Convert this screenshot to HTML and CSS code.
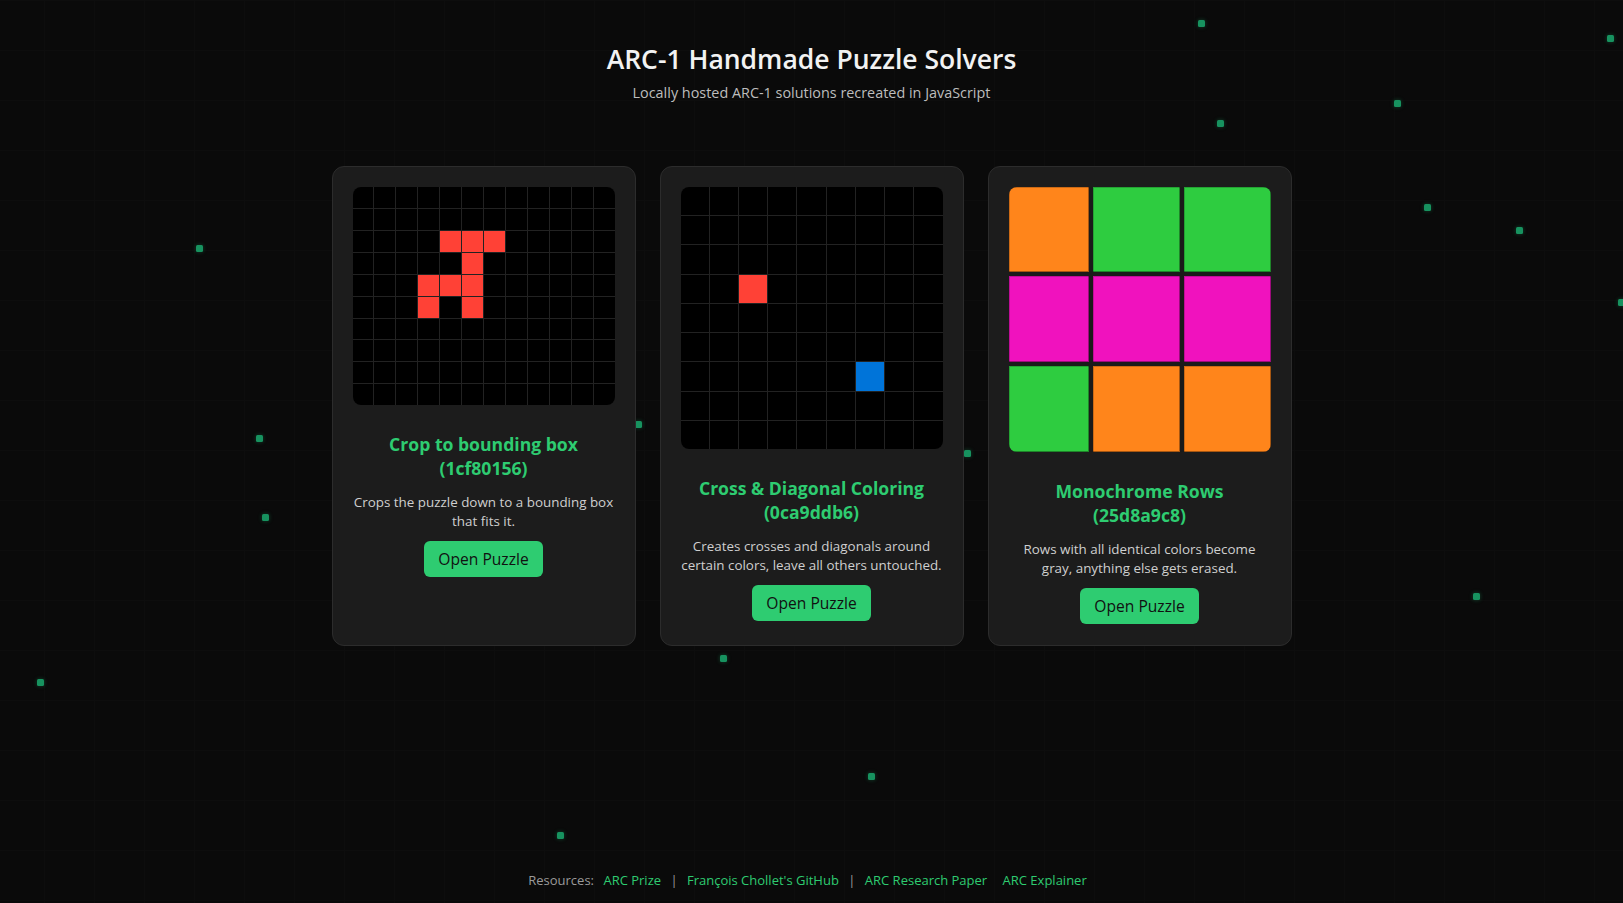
FILE: index.html
```html
<!DOCTYPE html>
<html lang="en">
<head>
<meta charset="utf-8">
<title>ARC-1 Handmade Puzzle Solvers</title>
<link rel="stylesheet" href="styles.css">
</head>
<body>
<div class="particles">
  <span class="dot" style="left:1198px;top:20px"></span>
  <span class="dot" style="left:1607px;top:35px"></span>
  <span class="dot" style="left:1394px;top:100px"></span>
  <span class="dot" style="left:1217px;top:120px"></span>
  <span class="dot" style="left:1424px;top:204px"></span>
  <span class="dot" style="left:1516px;top:227px"></span>
  <span class="dot" style="left:196px;top:245px"></span>
  <span class="dot" style="left:1618px;top:299px"></span>
  <span class="dot" style="left:256px;top:435px"></span>
  <span class="dot" style="left:635px;top:421px"></span>
  <span class="dot" style="left:964px;top:450px"></span>
  <span class="dot" style="left:262px;top:514px"></span>
  <span class="dot" style="left:1473px;top:593px"></span>
  <span class="dot" style="left:37px;top:679px"></span>
  <span class="dot" style="left:720px;top:655px"></span>
  <span class="dot" style="left:868px;top:773px"></span>
  <span class="dot" style="left:557px;top:832px"></span>
</div>
<div class="page">
  <header class="header">
    <h1 class="title">ARC-1 Handmade Puzzle Solvers</h1>
    <p class="subtitle">Locally hosted ARC-1 solutions recreated in JavaScript</p>
  </header>
  <main class="cards">
    <div class="card">
      <div class="grid grid-12x10" id="g1"></div>
      <h3 class="card-title">Crop to bounding box<br>(1cf80156)</h3>
      <p class="card-desc">Crops the puzzle down to a bounding box<br>that fits it.</p>
      <a class="btn" href="#">Open Puzzle</a>
    </div>
    <div class="card">
      <div class="grid grid-9x9" id="g2"></div>
      <h3 class="card-title">Cross &amp; Diagonal Coloring<br>(0ca9ddb6)</h3>
      <p class="card-desc">Creates crosses and diagonals around<br>certain colors, leave all others untouched.</p>
      <a class="btn" href="#">Open Puzzle</a>
    </div>
    <div class="card">
      <div class="grid grid-3x3" id="g3"></div>
      <h3 class="card-title">Monochrome Rows<br>(25d8a9c8)</h3>
      <p class="card-desc">Rows with all identical colors become<br>gray, anything else gets erased.</p>
      <a class="btn" href="#">Open Puzzle</a>
    </div>
  </main>
  <footer class="footer">
    <span class="res-label">Resources:</span>
    <a href="#" class="link">ARC Prize</a>
    <span class="sep">|</span>
    <a href="#" class="link">François Chollet's GitHub</a>
    <span class="sep">|</span>
    <a href="#" class="link">ARC Research Paper</a>
    <a href="#" class="link link-gap">ARC Explainer</a>
  </footer>
</div>
<script src="script.js"></script>
</body>
</html>
```

FILE: styles.css
```css
* { box-sizing: border-box; }
html, body { margin: 0; padding: 0; }
body {
  background-color: #0a0a0a;
  background-image:
    linear-gradient(to right, #0d0d0d 1px, transparent 1px),
    linear-gradient(to bottom, #0d0d0d 1px, transparent 1px);
  background-size: 50px 50px;
  background-position: 44px 0;
  font-family: "Open Sans", "Noto Sans", sans-serif;
  color: #e6e6e6;
  min-height: 100vh;
  overflow: hidden;
}
.particles { position: absolute; inset: 0; z-index: 0; pointer-events: none; }
.dot {
  position: absolute;
  width: 7px; height: 7px;
  border-radius: 1.5px;
  background: #17925f;
  box-shadow: 0 0 4px rgba(30, 180, 110, 0.35);
}
.page {
  position: relative;
  z-index: 1;
  min-height: 100vh;
  display: flex;
  flex-direction: column;
  align-items: center;
}
.header { text-align: center; padding-top: 41px; }
.title {
  margin: 0;
  font-size: 26.5px;
  line-height: 36px;
  font-weight: 600;
  color: #f2f2f2;
}
.subtitle {
  margin: 6px 0 0;
  font-size: 14.4px;
  line-height: 20px;
  color: #bdbdbd;
}
.cards {
  display: flex;
  gap: 24px;
  margin-top: 63px;
  align-items: stretch;
}
.card {
  width: 304px;
  background: #1c1c1c;
  border: 1px solid #2c2c2c;
  border-radius: 12px;
  padding: 20px 20px 21px;
  display: flex;
  flex-direction: column;
  align-items: center;
  text-align: center;
}
.grid {
  width: 262px;
  display: grid;
  border-radius: 8px;
  overflow: hidden;
  margin-bottom: 27px;
}
.grid-12x10 { grid-template-columns: repeat(12, 1fr); gap: 1px; background: #222; }
.grid-9x9 { grid-template-columns: repeat(9, 1fr); gap: 1px; background: #222; }
.grid-3x3 {
  grid-template-columns: 80px 87px 87px;
  grid-template-rows: 85px 86px 86px;
  gap: 4px;
  background: #1a1a1a;
}
.cell { background: #000; aspect-ratio: 1 / 1; }
.grid-3x3 .cell { aspect-ratio: auto; box-shadow: inset -1px -1px 0 rgba(0,0,0,0.35), inset 1px 1px 0 rgba(0,0,0,0.2); }
.c2 { background: #ff4136; }
.c1 { background: #0074d9; }
.c3 { background: #2ecc40; }
.c6 { background: #f012be; }
.c7 { background: #ff851b; }
.card-title {
  margin: 0 0 13px;
  font-size: 17.6px;
  line-height: 24px;
  font-weight: 700;
  color: #2ecc71;
}
.card-desc {
  margin: 0 0 10px;
  font-size: 13.4px;
  line-height: 19px;
  color: #cfcfcf;
  white-space: nowrap;
}
.btn {
  display: inline-block;
  background: #2ecc71;
  color: #111;
  text-decoration: none;
  font-size: 15.6px;
  font-weight: 500;
  line-height: 21px;
  padding: 8px 14px 7px;
  border-radius: 6px;
}
.footer {
  margin-top: auto;
  padding-bottom: 13px;
  padding-right: 8px;
  font-size: 13px;
  line-height: 20px;
  color: #9a9a9a;
}
.res-label { margin-right: 6px; }
.link { color: #2ecc71; text-decoration: none; }
.sep { margin: 0 6px; color: #9a9a9a; }
.link-gap { margin-left: 12px; }
```

FILE: script.js
```js
(function () {
  function build(id, cols, rows, colored) {
    var g = document.getElementById(id);
    for (var r = 0; r < rows; r++) {
      for (var c = 0; c < cols; c++) {
        var d = document.createElement('div');
        d.className = 'cell';
        var k = r + ',' + c;
        if (colored[k] !== undefined) d.className += ' c' + colored[k];
        g.appendChild(d);
      }
    }
  }
  build('g1', 12, 10, {
    '2,4': 2, '2,5': 2, '2,6': 2,
    '3,5': 2,
    '4,3': 2, '4,4': 2, '4,5': 2,
    '5,3': 2, '5,5': 2
  });
  build('g2', 9, 9, { '3,2': 2, '6,6': 1 });
  build('g3', 3, 3, {
    '0,0': 7, '0,1': 3, '0,2': 3,
    '1,0': 6, '1,1': 6, '1,2': 6,
    '2,0': 3, '2,1': 7, '2,2': 7
  });
})();
```
